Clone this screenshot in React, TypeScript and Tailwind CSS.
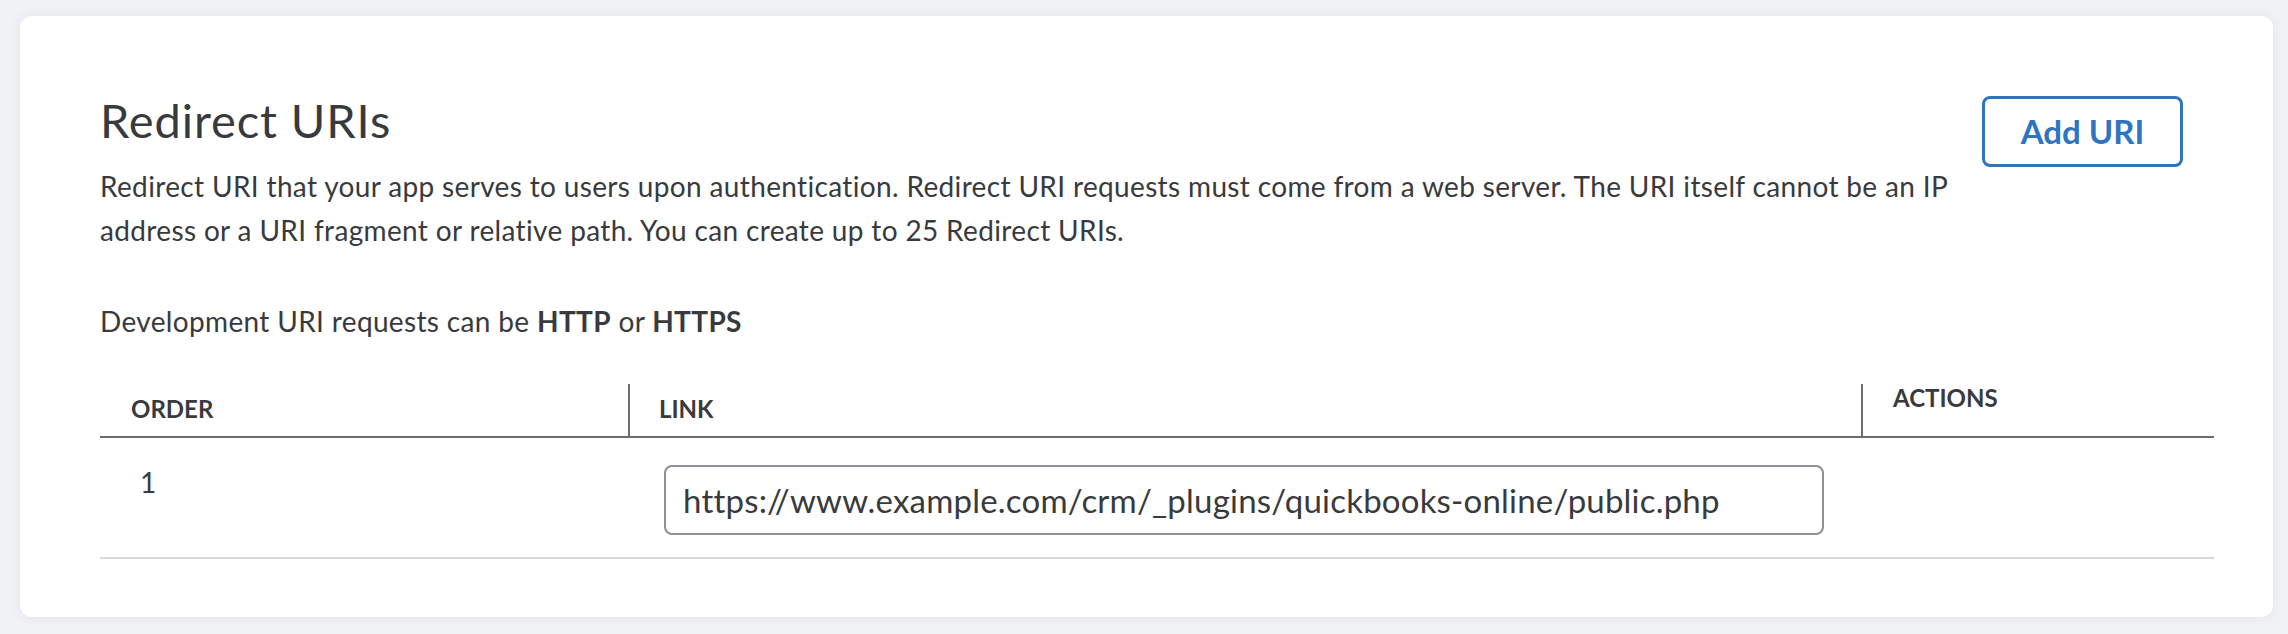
import React from 'react';

const ROWS = [
  { order: 1, link: 'https://www.example.com/crm/_plugins/quickbooks-online/public.php' },
];

export default function App() {
  return (
    <div className="min-h-[634px] w-full bg-[#f1f2f5] pl-[20px] pr-[15px] pt-[16px] pb-[17px] font-['Lato',_'Open_Sans',_sans-serif] text-[#393a3d]">
      <div className="h-[601px] rounded-[12px] bg-white pl-[80px] pr-[59px] pt-[78px] shadow-[0_0_14px_rgba(30,40,70,0.06)]">
        <div className="flex items-start justify-between">
          <div className="w-[1860px]">
            <h2 className="text-[47px] leading-[52px] font-normal tracking-[0.9px]">Redirect URIs</h2>
            <p className="mt-[18px] text-[28px] leading-[44px] tracking-[0.35px]">
              Redirect URI that your app serves to users upon authentication. Redirect URI requests must come
              from a web server. The URI itself cannot be an IP address or a URI fragment or relative path. You
              can create up to 25 Redirect URIs.
            </p>
            <p className="mt-[47px] text-[28px] leading-[44px] tracking-[0.35px]">
              Development URI requests can be <span className="font-bold">HTTP</span> or{' '}
              <span className="font-bold">HTTPS</span>
            </p>
          </div>
          <button
            type="button"
            className="mt-[2px] mr-[31px] h-[71px] w-[201px] rounded-[8px] border-[3px] border-[#2f74c0] text-[33px] font-bold text-[#2f74c0]"
          >
            Add URI
          </button>
        </div>

        <div className="mt-[41px] grid grid-cols-[528px_1233px_353px]">
          <div className="h-[54px] border-b-2 border-[#6b6c71] pl-[31px] pt-[13px] text-[24px] leading-[24px] font-bold">
            ORDER
          </div>
          <div className="h-[54px] border-b-2 border-l-2 border-[#6b6c71] pl-[29px] pt-[13px] text-[24px] leading-[24px] font-bold">
            LINK
          </div>
          <div className="h-[54px] border-b-2 border-l-2 border-[#6b6c71] pl-[30px] pt-[2px] text-[24px] leading-[24px] font-bold">
            ACTIONS
          </div>

          {ROWS.map((row) => (
            <React.Fragment key={row.order}>
              <div className="border-b-2 border-[#d6d8dc] pl-[40px] pt-[22px] text-[28px] leading-[44px]">
                {row.order}
              </div>
              <div className="border-b-2 border-[#d6d8dc] pl-[36px] pt-[27px] pb-[22px]">
                <input
                  readOnly
                  value={row.link}
                  className="h-[70px] w-[1160px] rounded-[8px] border-2 border-[#8d9096] bg-white pl-[17px] text-[33px] tracking-[0.2px] text-[#393a3d] outline-none"
                />
              </div>
              <div className="border-b-2 border-[#d6d8dc]" />
            </React.Fragment>
          ))}
        </div>
      </div>
    </div>
  );
}
